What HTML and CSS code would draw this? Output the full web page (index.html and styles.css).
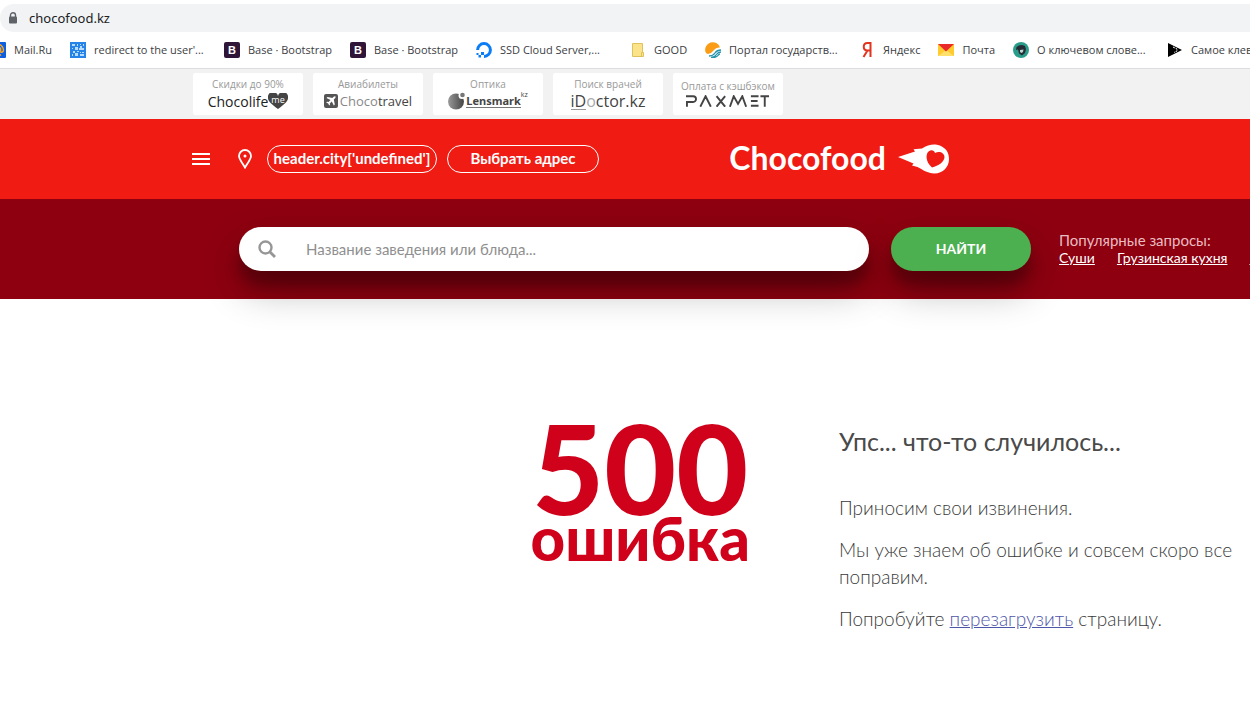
FILE: index.html
```html
<!DOCTYPE html>
<html lang="ru">
  <head>
    <meta charset="UTF-8" />
    <meta name="viewport" content="width=device-width, initial-scale=1.0" />
    <title>Chocofood</title>
    <link rel="stylesheet" href="styles.css">
  </head>
  <body>
    <!-- Browser chrome -->
    <div class="address-bar">
      <svg class="lock" viewBox="0 0 10 12">
        <path d="M2.500 5V3.200a2.500 2.500 0 0 1 5 0V5" fill="none" stroke="#5f6368" stroke-width="1.400" />
        <rect x="1" y="4.500" width="8" height="7" rx="1" fill="#5f6368" />
      </svg>
      <span>chocofood.kz</span>
    </div>

    <nav class="bookmarks">
      <a href="#" class="bookmark">
        <svg viewBox="0 0 16 16"><rect width="16" height="16" rx="1" fill="#0d5fe0" /><circle cx="8" cy="8" r="2.500" fill="none" stroke="#f9a825" stroke-width="1.600" /><path d="M10.500 5.500v3.500c0 2 3 1.500 3-1a5.500 5.500 0 1 0-2.500 4.600" fill="none" stroke="#f9a825" stroke-width="1.500" /></svg>
        <span>Mail.Ru</span>
      </a>
      <a href="#" class="bookmark">
        <svg viewBox="0 0 16 16"><rect width="16" height="16" fill="#2684e8" /><path d="M2 2h3v2H2zM7 2h1v2H7zM10 2h1v1h-1zM13 2h1v2h-1zM2 6h1v1H2zM5 5h3v3H5zM9 6h5v2H9zM10 4h2v2h-2zM3 9h2v2H3zM7 9h2v1H7zM2 12h1v2H2zM5 11h3v3H5zM10 10h1v1h-1zM12 10h2v1h-2zM10 12h4v2h-4z" fill="#b9dbff" /></svg>
        <span class="long">redirect to the user'...</span>
      </a>
      <a href="#" class="bookmark">
        <svg viewBox="0 0 16 16"><rect width="16" height="16" rx="2" fill="#2f1638" /><text x="8" y="12" text-anchor="middle" class="icon-b">B</text></svg>
        <span>Base · Bootstrap</span>
      </a>
      <a href="#" class="bookmark">
        <svg viewBox="0 0 16 16"><rect width="16" height="16" rx="2" fill="#2f1638" /><text x="8" y="12" text-anchor="middle" class="icon-b">B</text></svg>
        <span>Base · Bootstrap</span>
      </a>
      <a href="#" class="bookmark">
        <svg viewBox="0 0 16 16"><path d="M1.600 8A6.400 6.400 0 1 1 8 14.400" fill="none" stroke="#0a7cf5" stroke-width="3" /><path d="M5 10h3v3H5zM2.500 13H5v2.500H2.500zM.5 11h2v2h-2z" fill="#0a7cf5" /></svg>
        <span class="long">SSD Cloud Server,...</span>
      </a>
      <a href="#" class="bookmark">
        <svg viewBox="0 0 16 16"><path d="M2.500 1.500h10v9h1v4h-11z" fill="#fbe389" stroke="#dfc260" /><path d="M11.500 14v-3.500h2" fill="none" stroke="#dfc260" /></svg>
        <span>GOOD</span>
      </a>
      <a href="#" class="bookmark">
        <svg viewBox="0 0 16 16"><path d="M.5 10A7.500 7.500 0 1 1 15 5.500Q11 5 9 8T3 12Q1.500 12 .5 10z" fill="#fb9c17" /><path d="M4 14q4 0 6-3t6-3M6 15.500q4-.5 5.500-3T16 10M9 15.500q3-.5 4-2t2-1.500" fill="none" stroke="#2494ac" stroke-width="1.300" /></svg>
        <span class="long">Портал государств...</span>
      </a>
      <a href="#" class="bookmark">
        <svg viewBox="0 0 16 16"><path d="M11.500 15V1H8.500C3.500 1 3.500 8.500 8.500 8.500h3M8.500 8.500 4.500 15" fill="none" stroke="#e2331f" stroke-width="2" /></svg>
        <span>Яндекс</span>
      </a>
      <a href="#" class="bookmark">
        <svg viewBox="0 0 16 16"><path d="M0 2h16v12H0z" fill="#ffcb2e" /><path d="M0 14l8-6 8 6z" fill="#ffe06b" /><path d="M0 2h16L8 9.500z" fill="#ea2a2a" /></svg>
        <span>Почта</span>
      </a>
      <a href="#" class="bookmark">
        <svg viewBox="0 0 16 16"><circle cx="8" cy="8" r="8" fill="#2a9d8a" /><path d="M3.500 5q4-3.500 8.500-1l1 3-1 4-3 2.500-3-2-1-4-2 .5z" fill="#262c35" /><path d="M7 8l3.500-.5-.5 2.500-1.500 1-1.500-1z" fill="#b9d3cf" /></svg>
        <span class="long">О ключевом слове...</span>
      </a>
      <a href="#" class="bookmark">
        <svg viewBox="0 0 16 16"><path d="M1 1l14 7-14 7z" fill="#000" /><path d="M6 5l4 2v2l-3 1.500" fill="none" stroke="#fff" stroke-dasharray="2 1" /></svg>
        <span>Самое клевое</span>
      </a>
    </nav>

    <!-- Partner projects -->
    <div class="partners">
      <a href="#" class="partner">
        <small>Скидки до 90%</small>
        <span class="brand brand-life">Chocolife
          <svg viewBox="0 0 20 16"><path d="M10 16C3 11 0 8 0 5a5 5 0 0 1 10-2 5 5 0 0 1 10 2c0 3-3 6-10 11z" fill="#444" /><text x="10" y="10" text-anchor="middle" class="icon-me">me</text></svg>
        </span>
      </a>
      <a href="#" class="partner">
        <small>Авиабилеты</small>
        <span class="brand brand-travel">
          <svg viewBox="0 0 14 14"><rect width="14" height="14" rx="2" fill="#555" /><path d="M11.500 2.500c-1-.6-2 .4-3 1.500l-5-1-1 1 4 2-2 2-1.500-.2-.8.800 2 1 1 2 .8-.8L5.800 9.500l2-2 2 4 1-1-1-5c1.100-1 2.200-2 1.700-3z" fill="#fff" /></svg>
          <span>Choco<b>travel</b></span>
        </span>
      </a>
      <a href="#" class="partner">
        <small>Оптика</small>
        <span class="brand brand-lens">
          <svg viewBox="0 0 18 18">
            <defs><linearGradient id="lens"><stop offset="0" stop-color="#999" /><stop offset="1" stop-color="#444" /></linearGradient></defs>
            <circle cx="8" cy="9.500" r="8" fill="url(#lens)" /><circle cx="14" cy="3.500" r="3.500" fill="#fff" /><circle cx="14.500" cy="3" r="2.300" fill="#777" />
          </svg>
          <span class="lens-name">Lensmark</span><sup>kz</sup>
        </span>
      </a>
      <a href="#" class="partner">
        <small>Поиск врачей</small>
        <span class="brand brand-doctor"><i>iD</i><em>o</em>ctor.kz</span>
      </a>
      <a href="#" class="partner">
        <small>Оплата с кэшбэком</small>
        <svg class="rahmet" viewBox="0 0 88 12" role="img" aria-label="РАХМЕТ">
          <path d="M0 1h7.500a3 3 0 0 1 0 6H1v5M15 12l5.500-11L26 12M32 1l9 11M41 1l-9 11M46 12l4-11 4.500 8L59 1l4 11M76 1h-8M75 6h-7M76 11h-8M78 1h9M82.500 1v11" fill="none" stroke="#444" stroke-width="2" />
        </svg>
      </a>
    </div>

    <header class="header">
      <div class="header-left">
        <button class="menu-btn" aria-label="Меню"><span></span><span></span><span></span></button>
        <svg class="pin" viewBox="0 0 14 20"><path d="M7 18.500C4 13.500 1 10 1 7a6 6 0 0 1 12 0c0 3-3 6.500-6 11.500z" fill="none" stroke="#fff" stroke-width="1.800" /><circle cx="7" cy="7" r="1.500" fill="#fff" /></svg>
        <button class="pill pill-city">header.city['undefined']</button>
        <button class="pill pill-address">Выбрать адрес</button>
      </div>
      <a href="#" class="logo">
        <span>Chocofood</span>
        <svg viewBox="0 0 52 30"><path d="M0 13 17 7.500l-1.500-2.300L24 4.500C29 .8 35 0 39 .8 47 2.500 51 8 51 15c0 8-6 14.500-14.500 14.500-7 0-12-4-17-6.500l-5.500-1.500 1.500-2z" fill="#fff" /><path d="M34 23.500c-4-3.500-6.500-9-5-13.500 1.500-4.500 7-5 8-1 4.500-2.500 9.500 0 9.500 4 0 4.500-6 9-12.500 10.500z" fill="#f01b13" /></svg>
      </a>
    </header>

    <form class="search">
      <label class="search-field">
        <svg viewBox="0 0 18 18"><circle cx="7.500" cy="7.500" r="6" fill="none" stroke="#969696" stroke-width="2.400" /><path d="M12 12l5 5" stroke="#969696" stroke-width="2.800" /></svg>
        <input type="text" placeholder="Название заведения или блюда..." aria-label="Поиск" />
      </label>
      <button type="button" class="search-btn">НАЙТИ</button>
      <div class="popular">
        <span>Популярные запросы:</span>
        <div class="popular-links">
          <a href="#">Суши</a>
          <a href="#">Грузинская кухня</a>
          <a href="#">Пицца</a>
        </div>
      </div>
    </form>

    <main class="error">
      <div class="error-code">
        <div class="error-box">
          <div class="code">500</div>
          <div class="word">ошибка</div>
        </div>
      </div>
      <div class="error-text">
        <h1>Упс... что-то случилось...</h1>
        <p>Приносим свои извинения.</p>
        <p>Мы уже знаем об ошибке и совсем скоро все поправим.</p>
        <p>Попробуйте <a href="#">перезагрузить</a> страницу.</p>
      </div>
    </main>
  </body>
</html>
```
FILE: styles.css
```css
:root {
  --red: #f01b13;
  --dark-red: #8e0010;
  --error: #d0021b;
  --green: #4caf50;
}

* {
  margin: 0;
  padding: 0;
  box-sizing: border-box;
}

body {
  background: #fff;
  font-family: "Lato", "Open Sans", sans-serif;
  overflow-x: hidden;
}

button,
input {
  font-family: inherit;
}

/* Browser chrome */
.address-bar {
  display: flex;
  align-items: center;
  gap: 11px;
  height: 28px;
  margin-top: 4px;
  padding-left: 8px;
  background: #f1f3f4;
  border-radius: 14px 0 0 14px;
  font: 13px "Noto Sans", sans-serif;
  color: #202124;
}

.lock {
  width: 10px;
  height: 12px;
}

.bookmarks {
  display: flex;
  gap: 18px;
  height: 37px;
  margin-left: -10px;
  padding-bottom: 1px;
  border-bottom: 1px solid #dadce0;
}

.bookmark {
  display: flex;
  align-items: center;
  gap: 8px;
  flex-shrink: 0;
  color: #3c4043;
  font: 11px "Open Sans", sans-serif;
  text-decoration: none;
  white-space: nowrap;
}

.bookmark svg {
  width: 16px;
  height: 16px;
}

.bookmark .long {
  width: 112px;
}

.icon-b {
  font: bold 11px "Liberation Sans", sans-serif;
  fill: #fff;
}

/* Partner projects */
.partners {
  display: flex;
  gap: 10px;
  height: 50px;
  padding: 4px 0 4px 193px;
  background: #f2f2f2;
}

.partner {
  display: flex;
  flex-direction: column;
  align-items: center;
  justify-content: center;
  width: 110px;
  background: #fff;
  border-radius: 2px;
  color: #444;
  text-decoration: none;
  white-space: nowrap;
}

.partner small {
  font: 10px/14px "Open Sans", sans-serif;
  color: #999;
}

.brand {
  display: flex;
  align-items: center;
  height: 20px;
  font-family: "Open Sans", sans-serif;
  font-size: 14px;
}

.brand-life {
  color: #222;
}

.brand-life svg {
  width: 20px;
  height: 16px;
}

.icon-me {
  font: 9px "Open Sans", sans-serif;
  fill: #fff;
}

.brand-travel {
  gap: 2px;
  font-size: 13px;
  color: #888;
}

.brand-travel b {
  font-weight: 400;
  color: #444;
}

.brand-travel svg {
  width: 14px;
  height: 14px;
}

.brand-lens svg {
  width: 18px;
  height: 18px;
}

.lens-name {
  font: bold 11px/12px "Noto Sans", sans-serif;
  border-bottom: 1px solid #777;
}

.brand-lens sup {
  align-self: flex-start;
  font-size: 7px;
  line-height: 8px;
}

.brand-doctor {
  font-size: 16px;
}

.brand-doctor i {
  font-style: normal;
  line-height: 16px;
  border-bottom: 1px solid #999;
}

.brand-doctor em {
  font-style: normal;
  color: #aaa;
}

.rahmet {
  width: 84px;
  height: 12px;
  margin: 2px 0;
}

/* Header */
.header {
  display: flex;
  align-items: center;
  justify-content: space-between;
  height: 80px;
  padding: 0 300px 0 192px;
  background: var(--red);
}

.header-left {
  display: flex;
  align-items: center;
}

.menu-btn {
  display: flex;
  flex-direction: column;
  gap: 3px;
  width: 18px;
  background: none;
  border: none;
  cursor: pointer;
}

.menu-btn span {
  height: 2px;
  background: #fff;
}

.pin {
  width: 14px;
  height: 20px;
  margin: 0 15px 0 28px;
}

.pill {
  height: 28px;
  padding-bottom: 2px;
  background: none;
  border: 1px solid #fff;
  border-radius: 14px;
  color: #fff;
  font-size: 15px;
  font-weight: 700;
  white-space: nowrap;
  cursor: pointer;
}

.pill-city {
  width: 170px;
  margin-right: 10px;
}

.pill-address {
  width: 152px;
}

.logo {
  display: flex;
  align-items: center;
  gap: 12px;
  color: #fff;
  font-size: 32px;
  font-weight: 700;
  line-height: 40px;
  text-decoration: none;
}

.logo span {
  padding-bottom: 2px;
}

.logo svg {
  width: 52px;
  height: 30px;
}

/* Search */
.search {
  display: flex;
  align-items: center;
  height: 100px;
  padding-left: 239px;
  background: var(--dark-red);
}

.search-field {
  display: flex;
  align-items: center;
  flex: 1;
  gap: 30px;
  height: 44px;
  padding: 0 19px;
  background: #fff;
  border-radius: 22px;
  box-shadow: 0 19px 38px rgba(0, 0, 0, 0.3), 0 15px 12px rgba(0, 0, 0, 0.22);
}

.search-field svg {
  width: 18px;
  height: 18px;
}

.search-field input {
  flex: 1;
  border: none;
  outline: none;
  font-size: 15px;
}

.search-field input::placeholder {
  color: #8f8f8f;
}

.search-btn {
  width: 140px;
  height: 44px;
  margin: 0 28px 0 22px;
  padding-bottom: 2px;
  background: var(--green);
  border: none;
  border-radius: 22px;
  box-shadow: 0 19px 38px rgba(0, 0, 0, 0.3), 0 15px 12px rgba(0, 0, 0, 0.22);
  color: #fff;
  font-size: 14px;
  font-weight: 700;
  cursor: pointer;
}

.popular {
  width: 191px;
  color: #e9bcc0;
  font-size: 15px;
  line-height: 18px;
  white-space: nowrap;
}

.popular-links {
  display: flex;
  gap: 22px;
  font-size: 14px;
}

.popular-links a {
  color: #fff;
}

/* Error */
.error {
  display: flex;
  gap: 89px;
  padding-top: 120px;
}

.error-code {
  display: flex;
  justify-content: flex-end;
  flex: 0 0 60%;
  color: var(--error);
  font-weight: 900;
}

.error-box {
  text-align: center;
}

.code {
  font-size: 124px;
  line-height: 96px;
}

.word {
  font-size: 60px;
  line-height: 46px;
}

.error-text {
  flex: 1;
  padding-top: 6px;
  color: #3a3a3a;
}

.error-text h1 {
  margin-bottom: 37px;
  color: #4a4a4a;
  font-size: 25px;
  font-weight: 400;
  line-height: 32px;
}

.error-text p {
  margin-bottom: 15px;
  font-size: 19px;
  font-weight: 300;
  line-height: 27px;
}

.error-text p a {
  color: #4f55a8;
}
```
